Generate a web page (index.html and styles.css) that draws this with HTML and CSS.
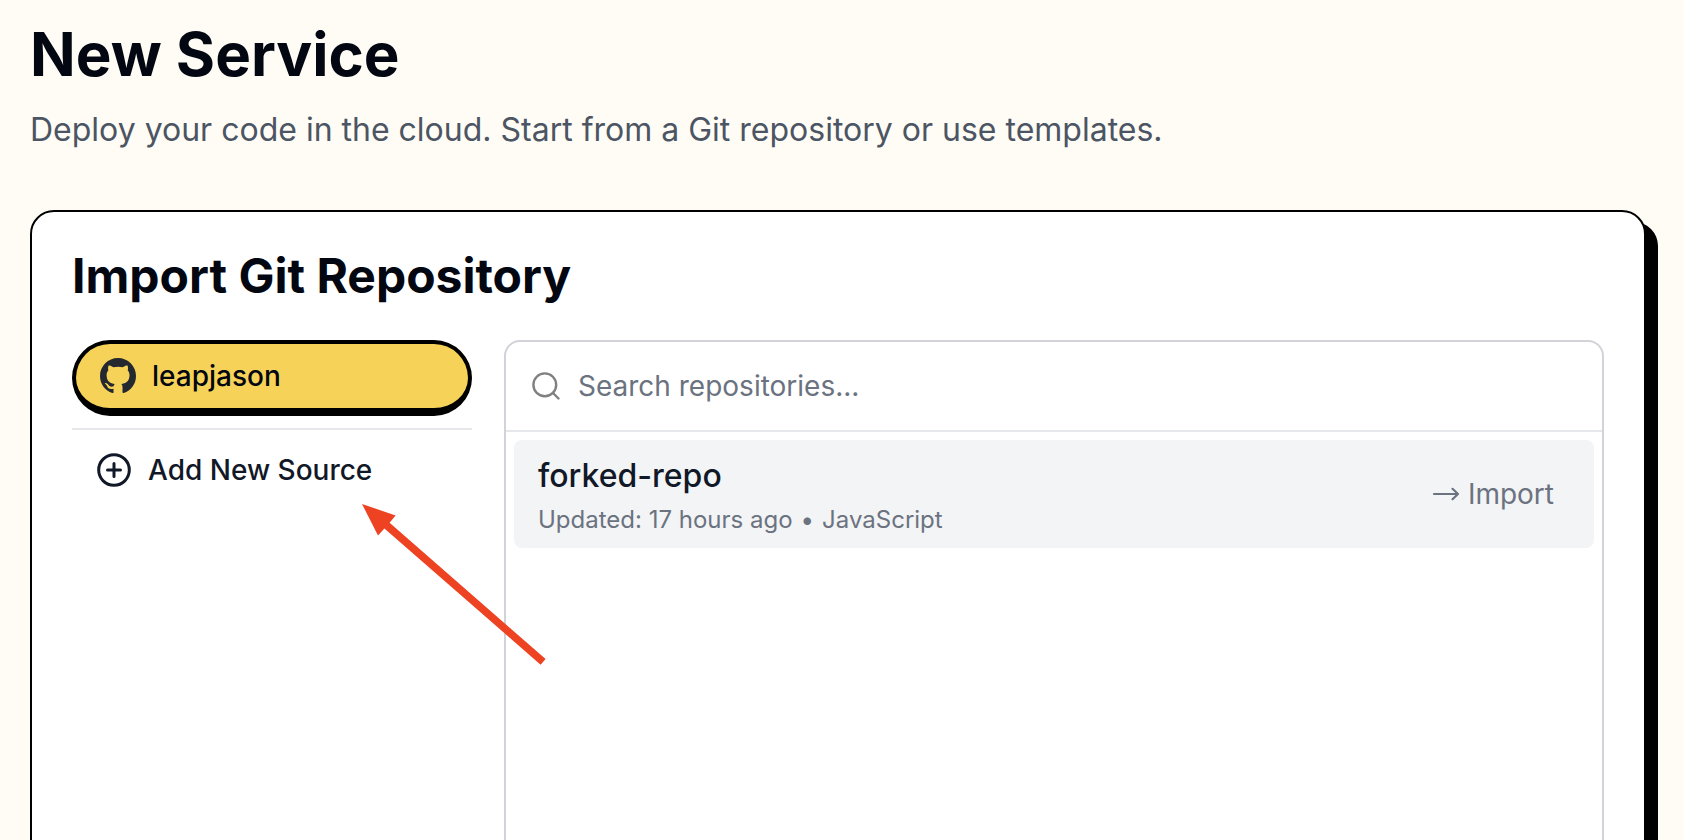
FILE: index.html
```html
<!DOCTYPE html>
<html lang="en">
<head>
    <meta charset="UTF-8">
    <title>New Service</title>
    <link rel="stylesheet" href="styles.css">
</head>
<body>
<main class="page">
    <h1>New Service</h1>
    <p class="intro">Deploy your code in the cloud. Start from a Git repository or use templates.</p>
    <section class="card">
        <h2>Import Git Repository</h2>
        <div class="columns">
            <div class="sources">
                <button type="button" class="source active">
                    <svg class="github" viewBox="0 0 16 16" aria-hidden="true"><path fill="#24292f" d="M8 0C3.58 0 0 3.58 0 8c0 3.54 2.29 6.53 5.47 7.59.4.07.55-.17.55-.38 0-.19-.01-.82-.01-1.49-2.01.37-2.53-.49-2.69-.94-.09-.23-.48-.94-.82-1.13-.28-.15-.68-.52-.01-.53.63-.01 1.08.58 1.23.82.72 1.21 1.87.87 2.33.66.07-.52.28-.87.51-1.07-1.78-.2-3.64-.89-3.64-3.95 0-.87.31-1.59.82-2.15-.08-.2-.36-1.02.08-2.12 0 0 .67-.21 2.2.82.64-.18 1.32-.27 2-.27s1.36.09 2 .27c1.53-1.04 2.2-.82 2.2-.82.44 1.1.16 1.92.08 2.12.51.56.82 1.27.82 2.15 0 3.07-1.87 3.75-3.65 3.95.29.25.54.73.54 1.48 0 1.07-.01 1.93-.01 2.2 0 .21.15.46.55.38A8.01 8.01 0 0 0 16 8c0-4.42-3.58-8-8-8z"/></svg>
                    leapjason
                </button>
                <hr>
                <button type="button" class="source">
                    <svg class="plus" viewBox="0 0 36 36" fill="none" stroke="currentColor" stroke-width="3" stroke-linecap="round" aria-hidden="true"><circle cx="18" cy="18" r="15.3"/><path d="M18 11.5v13M11.5 18h13"/></svg>
                    Add New Source
                </button>
                <svg class="pointer" viewBox="0 0 184 162" aria-hidden="true"><path fill="#ee4323" d="M0 0l33.6 11.4-6 7.4L183.6 155l-5 5.8L22.4 24.6l-6.4 7z"/></svg>
            </div>
            <div class="repos">
                <label class="search">
                    <svg class="lens" viewBox="0 0 28 28" fill="none" stroke="#808080" stroke-width="2.4" stroke-linecap="round" aria-hidden="true"><circle cx="12.8" cy="12.8" r="11.4"/><path d="M21 21l5.5 5.5"/></svg>
                    <input type="text" placeholder="Search repositories..." aria-label="Search repositories">
                </label>
                <ul>
                    <li>
                        <div class="info">
                            <h3>forked-repo</h3>
                            <p><span>Updated: 17 hours ago</span><span>•</span><span>JavaScript</span></p>
                        </div>
                        <button type="button" class="import">
                            <svg class="arrow" viewBox="0 0 28 14" fill="none" stroke="currentColor" stroke-width="2.2" stroke-linecap="round" stroke-linejoin="round" aria-hidden="true"><path d="M2 7h24M20.5 1.8L26 7l-5.5 5.2"/></svg>
                            Import
                        </button>
                    </li>
                </ul>
            </div>
        </div>
    </section>
</main>
</body>
</html>
```

FILE: styles.css
```css
*{margin:0; padding:0; box-sizing:border-box; list-style:none;}
body{background:#fffcf5; color:#030711; font-family:Inter, "Liberation Sans", sans-serif; overflow:hidden;}
button, input{font:inherit; color:inherit; background:none; border:0; outline:none;}
button{cursor:pointer;}
svg{flex-shrink:0; display:block;}

.page{height:100vh; padding:18px 38px 0 30px; display:flex; flex-direction:column;}
h1{font-size:60px; line-height:72px; font-weight:700;}
.intro{margin-top:16px; font-size:32px; line-height:48px; color:#4b5563;}

/* the card runs on below the fold */
.card{flex:1; margin:56px 0 -32px; padding:32px 40px 0; display:flex; flex-direction:column; background:#fff;
border:2px solid #000; border-radius:24px; box-shadow:12px 12px 0 #000;}
h2{font-size:48px; line-height:64px; font-weight:700;}
.columns{flex:1; margin-top:32px; display:flex; gap:32px;}

.sources{width:400px; flex-shrink:0; position:relative;}
.source{width:100%; height:56px; padding:0 24px; display:flex; align-items:center; gap:16px; font-size:28px;
font-weight:500; color:#111827;}
.active{height:76px; border:4px solid #000; border-bottom-width:8px; border-radius:38px; background:#f6d358;
color:#030711;}
.github{width:36px; height:36px;}
.plus{width:36px; height:36px;}
hr{height:2px; margin:12px 0; border:0; background:#e5e7eb;}
.pointer{width:184px; height:162px; position:absolute; left:290px; top:164px; z-index:1;}

.repos{flex:1; border:2px solid #d1d3d8; border-radius:16px;}
.search{height:90px; padding:0 26px; display:flex; align-items:center; gap:18px; border-bottom:2px solid #e5e7eb;}
.lens{width:28px; height:28px;}
.search input{flex:1; height:56px; font-size:28px;}
.search input::placeholder{color:#6b7280; opacity:1;}
ul{padding:8px;}
li{height:108px; padding:0 24px; display:flex; align-items:center; justify-content:space-between; border-radius:8px;
background:#f3f4f6;}
h3{font-size:32px; line-height:48px; font-weight:500; color:#111827;}
.info p{margin-top:4px; display:flex; gap:8px; font-size:24px; line-height:32px; color:#6b7280;}
.import{padding:0 16px; display:flex; align-items:center; gap:8px; font-size:28px; color:#6b7280;}
.arrow{width:28px; height:14px;}
```
